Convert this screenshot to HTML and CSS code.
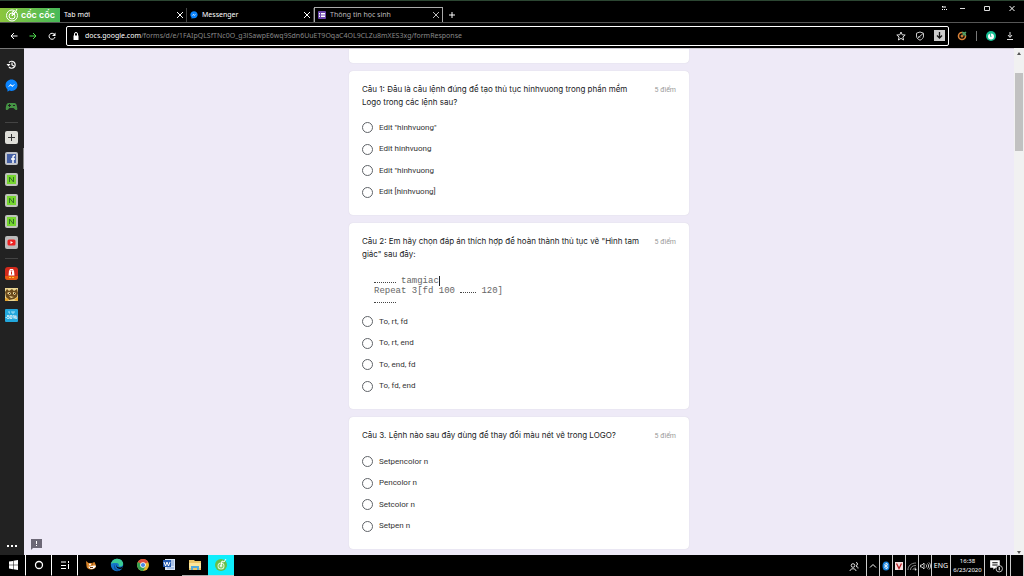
FILE: index.html
```html
<!DOCTYPE html>
<html lang="vi">
<head>
  <meta charset="UTF-8">
  <meta name="viewport" content="width=device-width, initial-scale=1.0">
  <title>Thông tin học sinh</title>
  <link rel="stylesheet" href="styles.css">
</head>
<body>
  <svg class="defs" aria-hidden="true">
    <symbol id="close" viewBox="0 0 8 8"><path d="M1 1l6 6M7 1L1 7" fill="none" stroke="currentColor"/></symbol>
    <symbol id="messenger" viewBox="0 0 12 12"><path d="M6 .5C2.900.5.5 2.800.5 5.800c0 1.600.7 2.900 1.800 3.900v2l1.800-1c.6.2 1.200.3 1.900.3 3.100 0 5.500-2.300 5.500-5.200S9.100.5 6 .5z" fill="#0a84ff"/><path d="M2.500 7.500L5.200 4.500l1.500 1.400 2.800-1.600L6.800 7.300 5.300 5.900z" fill="#fff"/></symbol>
    <symbol id="coccoc" viewBox="0 0 14 14"><circle cx="7" cy="7.500" r="5.500" fill="none" stroke="currentColor"/><circle cx="7" cy="8" r="3" fill="none" stroke="currentColor"/><path d="M7 8l1-5 2 2 2-4M7 8l3-3" fill="none" stroke="currentColor"/></symbol>
    <symbol id="letter-n" viewBox="0 0 13 13"><rect width="13" height="13" rx="2" fill="#bfc4bb"/><rect x="2" y="2" width="9" height="9" fill="#76d62f"/><path d="M4.500 9V4l4 5V4" fill="none" stroke="#35702c"/></symbol>
  </svg>

  <header class="browser">
    <nav class="tabs">
      <button class="brand"><svg class="icon-14"><use href="#coccoc"/></svg>cốc cốc</button>
      <div class="tab">
        <span>Tab mới</span>
        <button class="tab-close" aria-label="Đóng"><svg class="icon-8"><use href="#close"/></svg></button>
      </div>
      <div class="tab">
        <svg class="icon-8"><use href="#messenger"/></svg>
        <span>Messenger</span>
        <button class="tab-close" aria-label="Đóng"><svg class="icon-8"><use href="#close"/></svg></button>
      </div>
      <div class="tab active">
        <svg class="icon-8" viewBox="0 0 8 8"><rect width="8" height="8" rx="1" fill="#6a45ac"/><path d="M3 2.500h4M3 4h4M3 5.500h4M1 2.500h1M1 4h1M1 5.500h1" stroke="#fff"/></svg>
        <span>Thông tin học sinh</span>
        <button class="tab-close" aria-label="Đóng"><svg class="icon-8"><use href="#close"/></svg></button>
      </div>
      <button class="new-tab" aria-label="Tab mới"><svg class="icon-8" viewBox="0 0 8 8"><path d="M4 1v6M1 4h6" stroke="#fff"/></svg></button>
      <div class="window-buttons">
        <button aria-label="Menu"><svg class="icon-8" viewBox="0 0 8 8"><path d="M2 3h4M2 3l1-1M2 5.500h1M4 5.500h1M6 5.500h1" stroke="#fff" fill="none"/></svg></button>
        <button aria-label="Thu nhỏ"><svg class="icon-8" viewBox="0 0 8 8"><path d="M2 4.500h5" stroke="#ddd"/></svg></button>
        <button aria-label="Phóng to"><svg class="icon-8" viewBox="0 0 8 8"><path d="M1.500 2.500h5v4h-5z" stroke="#ddd" fill="none"/></svg></button>
        <button aria-label="Đóng"><svg class="icon-8" viewBox="0 0 8 8"><path d="M1.500 2l5 5M6.500 2l-5 5" stroke="#fff" fill="none"/></svg></button>
      </div>
    </nav>

    <div class="toolbar">
      <div class="history">
        <button aria-label="Quay lại"><svg class="icon-8" viewBox="0 0 8 8"><path d="M7.500 4H1M4 1L1 4l3 3" stroke="#fff" fill="none"/></svg></button>
        <button aria-label="Tiến"><svg class="icon-8" viewBox="0 0 8 8"><path d="M.5 4H7M4 1l3 3-3 3" stroke="#4fdc4f" fill="none"/></svg></button>
        <button aria-label="Tải lại"><svg class="icon-8" viewBox="0 0 8 8"><path d="M6.500 2.500A3 3 0 1 0 7 5" stroke="#fff" fill="none"/><path d="M7.500.5v3.500H4z" fill="#fff"/></svg></button>
      </div>
      <div class="address">
        <svg class="icon-8" viewBox="0 0 8 8"><path d="M1.500 3.500h5V8h-5z" fill="#fff"/><path d="M2.500 4V2a1.500 1.500 0 0 1 3 0v2" stroke="#fff" fill="none"/></svg>
        <div class="url" role="textbox" aria-label="Địa chỉ" contenteditable="true" spellcheck="false"><b>docs.google.com</b>/forms/d/e/1FAIpQLSfTNc0O_g3lSawpE6wq9Sdn6UuET9OqaC4OL9CLZu8mXES3xg/formResponse</div>
        <button aria-label="Dấu trang"><svg class="icon-10" viewBox="0 0 10 10"><path d="M5 1l1.200 2.800 3 .2-2.300 2 .7 3L5 7.400 2.400 9l.7-3L.8 4l3-.2z" stroke="#ddd" fill="none"/></svg></button>
        <button aria-label="Bảo vệ"><svg class="icon-10" viewBox="0 0 10 10"><path d="M5 1L8.500 2.200V5C8.500 7 7 8.400 5 9.200 3 8.400 1.500 7 1.500 5V2.200zM2.500 7.500L8 2.500M3.500 5L5 6.500" stroke="#ccc" fill="none"/></svg></button>
        <button aria-label="Tải về"><svg class="icon-11" viewBox="0 0 11 11"><path d="M0 0h11v11H0z" fill="#ccc"/><path d="M5.500 2v6M3 5.500L5.500 8 8 5.500" stroke="#111" stroke-width="1.300" fill="none"/></svg></button>
      </div>
      <div class="extensions">
        <button aria-label="Tiện ích"><svg class="icon-10" viewBox="0 0 10 10"><circle cx="5" cy="5" r="3.500" fill="none" stroke="#d98238" stroke-width="1.600"/><path d="M5 1.500A3.500 3.500 0 0 1 8.500 5M5 5l4-4" fill="none" stroke="#4aa36a" stroke-width="1.400"/><circle cx="5" cy="5" r="1.500" fill="#c77a36"/></svg></button>
        <span class="bar"></span>
        <button aria-label="Tài khoản"><svg class="icon-10" viewBox="0 0 10 10"><circle cx="5" cy="5" r="5" fill="#16bd92"/><circle cx="5" cy="5.500" r="3" fill="#fff"/><path d="M5 6L4 2" stroke="#16bd92"/></svg></button>
        <button aria-label="Tải xuống"><svg class="icon-10" viewBox="0 0 10 10"><path d="M5 1v5M3 4l2 2.500L7 4M2 8.500h6" stroke="#ddd" fill="none"/></svg></button>
      </div>
    </div>
  </header>

  <div class="middle">
    <aside class="sidebar">
      <button aria-label="Lịch sử"><svg viewBox="0 0 13 13"><path d="M4 4.500A3.500 3.500 0 1 1 4 9M7 4.500v2.500l2 1" stroke="#fff" stroke-width="1.200" fill="none"/><path d="M1.500 6h4L3.500 8.500z" fill="#fff"/></svg></button>
      <button aria-label="Messenger"><svg><use href="#messenger"/></svg></button>
      <button aria-label="Trò chơi"><svg viewBox="0 0 13 13"><path d="M3.500 3h6c2 0 2.500 3 2.800 5.500.2 1.800-1.300 2-2.200 1L8.500 8h-4L3 9.500c-1 1-2.500.8-2.200-1C1 6 1.500 3 3.500 3z" fill="#459344"/><path d="M3 5.500h3M4.500 4v3M8 5.500h2" stroke="#222"/></svg></button>
      <hr>
      <button aria-label="Thêm"><svg viewBox="0 0 13 13"><rect width="13" height="13" rx="2" fill="#deded8"/><path d="M6.500 3v7M3 6.500h7" stroke="#333"/></svg></button>
      <button aria-label="Facebook" class="current"><svg viewBox="0 0 13 13"><rect width="13" height="13" rx="2" fill="#bfc2c8"/><path d="M2 2h9v9H2z" fill="#4661a5"/><path d="M8 11V5.500C8 4 8.500 3.500 10 3.700M6 7h4" stroke="#fff" stroke-width="1.500" fill="none"/></svg></button>
      <button aria-label="N 1"><svg><use href="#letter-n"/></svg></button>
      <button aria-label="N 2"><svg><use href="#letter-n"/></svg></button>
      <button aria-label="N 3"><svg><use href="#letter-n"/></svg></button>
      <button aria-label="YouTube"><svg viewBox="0 0 13 13"><rect width="13" height="13" rx="2" fill="#bbb"/><rect x="2.500" y="3.500" width="8" height="6" rx="1.500" fill="#e22"/><path d="M5.500 5l2.500 1.500L5.500 8z" fill="#fff"/></svg></button>
      <hr>
      <button aria-label="Mua sắm"><svg viewBox="0 0 13 13"><rect width="13" height="13" rx="3" fill="#d22a1c"/><path d="M0 9h13v1a3 3 0 0 1-3 3H3a3 3 0 0 1-3-3z" fill="#e85a10"/><path d="M4 3.500h5l.5 5h-6z" fill="#fff"/><path d="M5 4V2.500h3V4" stroke="#fff" fill="none"/><path d="M6.500 4.500v3" stroke="#d22a1c"/><path d="M4 10.500h2M7 10.500h2" stroke="#fc3"/></svg></button>
      <button aria-label="Trò chơi mới"><svg viewBox="0 0 13 13"><path d="M0 0h13v13H0z" fill="#e9d592"/><path d="M0 4l2-3 2 2 3-2 2 2 3-2 1 4-1 4-3 2-5 1-3-3z" fill="#6b4a1c"/><path d="M2 5l2-1 2 1-1 2-2-1zM8 4l3 1-1 2-2-1zM4 8l5 1-3 1z" fill="#f3dda0"/><path d="M4 5h1v1H4zM9 5h1v1H9z" fill="#222"/><path d="M0 10l4 1-1 2H0zM9 12l4-3v4z" fill="#e6a42c"/></svg></button>
      <button aria-label="Giảm giá"><svg viewBox="0 0 13 13"><rect width="13" height="13" rx="1" fill="#22a7dc"/><path d="M4 2v2h1M7 2v2h2V2" stroke="#a5e2f8" fill="none"/><text x="6" y="10" class="sale">-50%</text></svg></button>
      <button aria-label="Khác" class="more"><svg viewBox="0 0 13 13"><path d="M2 7h2v2H2zM6 7h2v2H6zM10 7h2v2h-2z" fill="#fff"/></svg></button>
    </aside>

    <main class="page">
      <form class="form">
        <section class="card previous"></section>

        <section class="card">
          <div class="question">
            <h2>Câu 1: Đâu là câu lệnh đúng để tạo thủ tục hinhvuong trong phần mềm Logo trong các lệnh sau?</h2>
            <span class="points">5 điểm</span>
          </div>
          <div class="options">
            <label><input type="radio" name="q1">Edit "hinhvuong"</label>
            <label><input type="radio" name="q1">Edit hinhvuong</label>
            <label><input type="radio" name="q1">Edit "hinhvuong</label>
            <label><input type="radio" name="q1">Edit [hinhvuong]</label>
          </div>
        </section>

        <section class="card">
          <div class="question">
            <h2>Câu 2: Em hãy chọn đáp án thích hợp để hoàn thành thủ tục vẽ "Hình tam giác" sau đây:</h2>
            <span class="points">5 điểm</span>
          </div>
          <div class="code">
            <p><i class="blank"></i>tamgiac<i class="caret"></i></p>
            <p>Repeat 3[fd 100 <i class="blank short"></i>120]</p>
            <p><i class="blank"></i></p>
          </div>
          <div class="options after-code">
            <label><input type="radio" name="q2">To, rt, fd</label>
            <label><input type="radio" name="q2">To, rt, end</label>
            <label><input type="radio" name="q2">To, end, fd</label>
            <label><input type="radio" name="q2">To, fd, end</label>
          </div>
        </section>

        <section class="card">
          <div class="question">
            <h2>Câu 3. Lệnh nào sau đây dùng để thay đổi màu nét vẽ trong LOGO?</h2>
            <span class="points">5 điểm</span>
          </div>
          <div class="options">
            <label><input type="radio" name="q3">Setpencolor n</label>
            <label><input type="radio" name="q3">Pencolor n</label>
            <label><input type="radio" name="q3">Setcolor n</label>
            <label><input type="radio" name="q3">Setpen n</label>
          </div>
        </section>
      </form>
      <button class="feedback" aria-label="Báo cáo"><svg viewBox="0 0 11 11"><path d="M0 0h11v9H2L0 11z" fill="#6c6876"/><path d="M5.500 2v3M5.500 6v1" stroke="#fff"/></svg></button>
    </main>

    <div class="scrollbar">
      <span class="arrow up"></span>
      <span class="thumb"></span>
      <span class="arrow down"></span>
    </div>
  </div>

  <footer class="taskbar">
    <div class="apps">
      <button class="boxed" aria-label="Start"><svg viewBox="0 0 14 14"><path d="M3 3.500l4-.6v3.900H3zM7.500 2.800L12 2v4.800H7.500zM3 7.300h4v3.900l-4-.6zM7.500 7.300H12V12l-4.500-.7z" fill="#fff"/></svg></button>
      <button class="boxed" aria-label="Cortana"><svg viewBox="0 0 14 14"><circle cx="7" cy="7" r="3.500" fill="none" stroke="#fff" stroke-width="1.300"/></svg></button>
      <button class="boxed" aria-label="Task view"><svg viewBox="0 0 14 14"><path d="M3 4h5M3 7.500h5M3 10.500h5M10.500 3v2M10.500 6v5" stroke="#fff"/></svg></button>
      <button aria-label="Scratch"><svg viewBox="0 0 14 14"><path d="M2 3l2.500 2H8l2.500-1 1.500 3.500c0 3-2.500 4-5 4S2.500 10 2.500 8z" fill="#d98428"/><path d="M4 8.500c2 1 5-2 8-.5-1 3-6 4.500-8 .5z" fill="#fff"/><circle cx="6" cy="6.500" r="1" fill="#fff"/><path d="M8 6h1M6 9.500h3" stroke="#5b3010"/></svg></button>
      <button aria-label="Edge"><svg viewBox="0 0 14 14"><circle cx="7" cy="7" r="6.200" fill="#1474c9"/><path d="M1 6C2 2 5 .8 7.500.8c3.500 0 6 3 5.600 5.500-.4 2-2.600 2.700-4.600 2 1-1.500 0-3.300-2-3.300C4 4.800 2 5 1 6z" fill="#3acb96"/><path d="M5.500 6C3.500 9 6.500 12.500 11 11.500L9 13C4 13 2.500 8.500 5.500 6z" fill="#0d4f9c"/><path d="M7 6.500c-1 2 1 3.500 4 3l2-1.500-1 2.500C9 12 5 9.500 7 6.500z" fill="#000"/></svg></button>
      <button aria-label="Chrome"><svg viewBox="0 0 14 14"><circle cx="7" cy="7" r="6" fill="#e5b52c"/><path d="M7 7L1.800 4A6 6 0 0 1 12.200 4z" fill="#dc4b3d"/><path d="M7 7L1.800 4A6 6 0 0 0 7 13l2.500-4.500z" fill="#35a056"/><circle cx="7" cy="7" r="2.800" fill="#fff"/><circle cx="7" cy="7" r="2.100" fill="#4989e8"/></svg></button>
      <button aria-label="Word"><svg viewBox="0 0 14 14"><path d="M3 1h10v11H3z" fill="#d8e6f8"/><path d="M9 3h3M9 5h3M9 7h3M5 10h7" stroke="#789bd0"/><path d="M1 2h8v7H1z" fill="#235ab0"/><path d="M2 4l1.500 4L5 4l1.500 4L8 4" fill="none" stroke="#fff"/></svg></button>
      <button class="open" aria-label="File Explorer"><svg viewBox="0 0 14 14"><path d="M1 2h5l1 1h6v9H1z" fill="#ebc568"/><path d="M1 5h12v5H1z" fill="#fbe49a"/><path d="M3 12V8h8v4H9v-2H5v2z" fill="#50a9dc"/></svg></button>
      <button class="focus" aria-label="Cốc Cốc"><svg viewBox="0 0 14 14"><circle cx="7" cy="7" r="6" fill="#69be48"/><circle cx="7" cy="8" r="3.500" fill="#d9f3d0"/><circle cx="7" cy="8" r="2" fill="none" stroke="#69be48"/><path d="M7 8l1-5 2 1 2-3" stroke="#fff" fill="none"/></svg></button>
    </div>
    <div class="tray">
      <button class="people" aria-label="People"><svg viewBox="0 0 12 12"><circle cx="5" cy="5.500" r="1.800" fill="none" stroke="#ddd"/><path d="M2 11c0-3 6-3 6 0M8 2.500a1.500 1.500 0 1 1 0 3M8 6.500c2 0 2 1 2 2" fill="none" stroke="#ddd"/></svg></button>
      <button aria-label="Hiện thêm"><svg viewBox="0 0 12 12"><path d="M3 7.500l3-3 3 3" fill="none" stroke="#fff"/></svg></button>
      <button aria-label="Bluetooth"><svg viewBox="0 0 12 12"><ellipse cx="6" cy="6" rx="3.500" ry="4.500" fill="#1681df"/><path d="M4 4.500l4 3-2 1.500V3l2 1.500-4 3" fill="none" stroke="#fff" stroke-width=".8"/></svg></button>
      <button aria-label="Unikey"><svg viewBox="0 0 12 12"><path d="M2 2h8v8H2z" fill="#f5dede"/><path d="M3.500 3.500L6 8.500l2.500-5" fill="none" stroke="#b52026" stroke-width="1.300"/></svg></button>
      <button aria-label="Wi-Fi"><svg viewBox="0 0 12 12"><path d="M2 10c0-4 3-7 8-7M4.500 10c0-3 2-4.500 5.500-4.500M7 10c0-1.500 1-2 3-2" fill="none" stroke="#888"/><circle cx="9.500" cy="9.500" r="1" fill="#ddd"/></svg></button>
      <button aria-label="Âm lượng"><svg viewBox="0 0 12 12"><path d="M1.500 5H3l2-2v6L3 7H1.500zM7 4.500c.8 1 .8 2 0 3M8.500 3.500c1.500 1.500 1.500 3.500 0 5M10 2.500c2 2 2 5 0 7" fill="none" stroke="#ddd" stroke-width=".9"/></svg></button>
      <button class="language">ENG</button>
      <button class="clock"><time>16:38</time><time>6/23/2020</time></button>
      <button class="notice" aria-label="Thông báo"><svg viewBox="0 0 14 14"><path d="M2 2h9v7H7l-2 2V9H2z" fill="#fff"/><path d="M4 4.500h5M4 6.500h5" stroke="#000"/><circle cx="10.500" cy="10" r="3" fill="#000" stroke="#ddd" stroke-width=".8"/><path d="M10.500 8.500v3" stroke="#fff"/></svg></button>
      <span class="edge"></span>
      <button class="desktop" aria-label="Desktop"></button>
    </div>
  </footer>
</body>
</html>
```
FILE: styles.css
```css
* {
  box-sizing: border-box;
}

body {
  margin: 0;
  height: 100vh;
  display: flex;
  flex-direction: column;
  overflow: hidden;
  background: #000;
  color: #fff;
  font: 7px/12px "Noto Sans", "Open Sans", sans-serif;
}

button {
  display: flex;
  align-items: center;
  justify-content: center;
  flex: none;
  padding: 0;
  border: 0;
  background: none;
  color: inherit;
  font: inherit;
}

svg {
  display: block;
  flex: none;
}

.defs {
  position: absolute;
  width: 0;
  height: 0;
}

.icon-8 { width: 8px; height: 8px; }
.icon-10 { width: 10px; height: 10px; }
.icon-11 { width: 11px; height: 11px; }
.icon-14 { width: 14px; height: 14px; }

/* tabs */
.tabs {
  display: flex;
  align-items: flex-end;
  height: 23px;
  border-top: 1px solid #2c4632;
  border-bottom: 1px solid #555;
}

.brand {
  width: 60px;
  height: 14px;
  gap: 2px;
  background: linear-gradient(90deg, #8cc63e, #46b958);
  font: 600 9px/14px Inter, sans-serif;
}

.tab {
  display: flex;
  align-items: center;
  gap: 4px;
  width: 127px;
  height: 14px;
  padding: 0 2px 0 4px;
  border-right: 1px solid #444;
}

.tab + .tab {
  padding-left: 3px;
}

.tab.active {
  width: 129px;
  height: 15px;
  border: 1px solid #aaa;
  border-bottom: 0;
  color: #bbb;
}

.tab-close {
  margin-left: auto;
}

.new-tab {
  width: 18px;
  height: 14px;
}

.window-buttons {
  display: flex;
  align-self: flex-start;
  gap: 17px;
  margin: 3px 8px 0 auto;
}

.window-buttons button:first-child {
  margin-right: -7px;
}

/* toolbar */
.toolbar {
  display: flex;
  align-items: center;
  height: 25px;
}

.history {
  display: flex;
  gap: 11px;
  width: 66px;
  padding-left: 10px;
}

.address {
  display: flex;
  flex: 1;
  align-items: center;
  gap: 9px;
  min-width: 0;
  height: 20px;
  padding: 0 3px 0 5px;
  border: 1px solid #fff;
  border-radius: 2px;
}

.url {
  flex: 1;
  min-width: 0;
  margin-left: -4px;
  overflow: hidden;
  color: #888;
  white-space: nowrap;
}

.url b {
  color: #fff;
  font-weight: normal;
}

.extensions {
  display: flex;
  align-items: center;
  gap: 9px;
  width: 75px;
  padding-left: 8px;
}

.bar {
  width: 1px;
  height: 10px;
  background: #777;
}

/* side bar */
.middle {
  display: flex;
  flex: 1;
  min-height: 0;
}

.sidebar {
  display: flex;
  flex-direction: column;
  width: 24px;
  padding: 5px 0 0;
  border-top: 1px solid #777;
  background: #222;
}

.sidebar button {
  width: 23px;
  height: 21px;
}

.sidebar svg {
  width: 13px;
  height: 13px;
}

.sidebar hr {
  width: 13px;
  margin: 5px 0 4px 5px;
  border: 0;
  border-top: 1px solid #444;
}

.sidebar .current {
  width: 24px;
  border-right: 1px solid #888;
}

.sidebar .more {
  margin-top: auto;
}

.sale {
  fill: #fff;
  font: bold 5px "Liberation Sans", sans-serif;
  text-anchor: middle;
}

/* form */
.page {
  position: relative;
  flex: 1;
  overflow: hidden;
  border-top: 1px solid #ccc8d2;
  background: #eeeaf7;
  color: #202124;
}

.form {
  display: flex;
  flex-direction: column;
  gap: 8px;
  max-width: 340px;
  margin: 0 auto;
}

.card {
  padding: 12px 13px;
  border-radius: 4px;
  background: #fff;
  box-shadow: 0 0 1px #c9c5d2;
}

.card.previous {
  height: 14px;
  padding: 0;
  border-radius: 0 0 4px 4px;
}

.question {
  display: flex;
  justify-content: space-between;
  min-height: 14px;
}

.question h2 {
  max-width: 285px;
  margin: 0;
  font: 8px/13px Inter, sans-serif;
}

.points {
  flex: none;
  color: #999;
  font: 7px/14px Roboto, sans-serif;
}

.options {
  display: grid;
  grid-template-rows: repeat(4, 1fr);
  height: 86px;
  margin-top: 8px;
  font: 8px/10px Roboto, sans-serif;
}

.options.after-code {
  margin-top: 2px;
}

.options label {
  display: flex;
  align-items: center;
  gap: 6px;
  color: #333;
}

.options input {
  appearance: none;
  width: 11px;
  height: 11px;
  margin: 0;
  border: 1px solid #5f6368;
  border-radius: 50%;
}

.options input:checked {
  border: 3px solid #673ab7;
}

.code {
  padding: 15px 0 3px 12px;
  color: #666;
  font: 9px/11px "Liberation Mono", monospace;
}

.code p {
  height: 10px;
  margin: 0;
}

.blank {
  display: inline-block;
  width: 22px;
  margin-right: 5px;
  border-bottom: 1px dotted #444;
}

.blank.short {
  width: 16px;
}

.caret {
  display: inline-block;
  height: 10px;
  border-right: 1px solid #222;
  vertical-align: top;
}

.feedback {
  position: absolute;
  left: 7px;
  bottom: 5px;
}

.feedback svg {
  width: 11px;
  height: 11px;
}

.scrollbar {
  display: flex;
  flex-direction: column;
  align-items: center;
  width: 10px;
  padding: 4px 0 1px;
  background: #f1f1f1;
}

.thumb {
  width: 8px;
  height: 78px;
  margin-top: 18px;
  background: #c1c1c1;
}

.arrow {
  border: 2px solid transparent;
}

.arrow.up {
  border-top: 0;
  border-bottom: 3px solid #555;
}

.arrow.down {
  margin-top: auto;
  border-top: 3px solid #555;
  border-bottom: 0;
}

/* task bar */
.taskbar {
  display: flex;
  justify-content: space-between;
  height: 21px;
}

.apps,
.tray {
  display: flex;
}

.apps button {
  width: 26px;
  border-bottom: 1px solid transparent;
}

.apps .boxed {
  border-right: 1px solid #fff;
}

.apps svg {
  width: 14px;
  height: 14px;
}

.apps .open {
  border-bottom-color: #aaa;
}

.apps .focus {
  border-bottom-color: #ccc;
  background: #0feefc;
}

.tray button {
  width: 13px;
  border-right: 1px solid #ccc;
}

.tray svg {
  width: 12px;
  height: 12px;
}

.tray .people {
  width: 26px;
}

.tray .language {
  width: 19px;
}

.tray .clock {
  flex-direction: column;
  width: 34px;
  font-size: 6px;
  line-height: 9px;
}

.tray .notice {
  width: 22px;
}

.tray .notice svg {
  width: 15px;
  height: 15px;
}

.edge {
  width: 4px;
  border-right: 1px solid #ccc;
}
```
